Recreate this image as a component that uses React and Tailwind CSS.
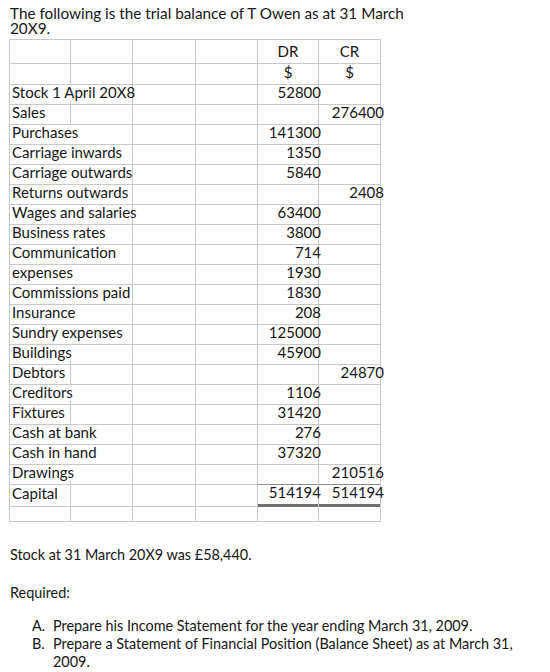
import React from 'react';

const rows = [
  { label: '', dr: 'DR', cr: 'CR', head: true, h: 'h-[21px]' },
  { label: '', dr: '$', cr: '$', head: true },
  { label: 'Stock 1 April 20X8', dr: '52800' },
  { label: 'Sales', cr: '276400' },
  { label: 'Purchases', dr: '141300' },
  { label: 'Carriage inwards', dr: '1350' },
  { label: 'Carriage outwards', dr: '5840' },
  { label: 'Returns outwards', cr: '2408' },
  { label: 'Wages and salaries', dr: '63400' },
  { label: 'Business rates', dr: '3800' },
  { label: 'Communication', dr: '714' },
  { label: 'expenses', dr: '1930' },
  { label: 'Commissions paid', dr: '1830' },
  { label: 'Insurance', dr: '208' },
  { label: 'Sundry expenses', dr: '125000' },
  { label: 'Buildings', dr: '45900' },
  { label: 'Debtors', cr: '24870' },
  { label: 'Creditors', dr: '1106' },
  { label: 'Fixtures', dr: '31420' },
  { label: 'Cash at bank', dr: '276' },
  { label: 'Cash in hand', dr: '37320' },
  { label: 'Drawings', cr: '210516', ruleBelow: true },
  { label: 'Capital', dr: '514194', cr: '514194', total: true },
  { label: '', h: 'h-[21px]' },
];

// short labels leave the gridline between the first two columns visible
const shortLabels = ['', 'Sales', 'Debtors', 'Fixtures', 'Capital'];

function Row({ row }) {
  const h = row.h || 'h-[20px]';
  const split = shortLabels.includes(row.label);
  const cell = 'border-r border-b border-[#c9c9c9] flex items-center';
  let numBorder = 'border-b-[#c9c9c9]';
  if (row.ruleBelow) numBorder = 'border-b-[#8c8c8c]';
  if (row.total) numBorder = 'border-b-[3px] border-b-[#707070]';

  return (
    <div className={`grid grid-cols-[61px_62px_63px_62px_61px_62px] ${h}`}>
      {split ? (
        <>
          <div className={`${cell} pl-[2px] whitespace-nowrap`}>{row.label}</div>
          <div className={cell} />
        </>
      ) : (
        <div className={`${cell} col-span-2 pl-[2px] whitespace-nowrap`}>{row.label}</div>
      )}
      <div className={cell} />
      <div className={cell} />
      <div className={`border-r border-b border-[#c9c9c9] ${numBorder} flex items-center ${row.head ? 'justify-center' : 'justify-end'} whitespace-nowrap`}>
        <span className={row.head ? '' : '-mr-[3px]'}>{row.dr}</span>
      </div>
      <div className={`border-r border-b border-[#c9c9c9] ${numBorder} flex items-center ${row.head ? 'justify-center' : 'justify-end'} whitespace-nowrap`}>
        <span className={row.head ? '' : '-mr-[4px]'}>{row.cr}</span>
      </div>
    </div>
  );
}

export default function App() {
  return (
    <div className="w-[550px] h-[672px] bg-white text-[#161616] px-[10px] pt-[6px] overflow-hidden" style={{ fontFamily: 'Lato, "Open Sans", sans-serif' }}>
      <p className="text-[15.3px] leading-[15px]">
        The following is the trial balance of T Owen as at 31 March
        <br />
        20X9.
      </p>

      <div className="mt-[3px] -ml-[1px] w-[372px] border-l border-t border-[#c9c9c9] text-[15px]">
        {rows.map((r, i) => (
          <Row key={i} row={r} />
        ))}
      </div>

      <div className="text-[14.4px]">
        <p className="mt-[22px]">Stock at 31 March 20X9 was £58,440.</p>
        <p className="mt-[16px]">Required:</p>

        <ol className="mt-[14px] ml-[22px] leading-[18px]">
          <li className="flex">
            <span className="w-[21px] shrink-0">A.</span>
            <span>Prepare his Income Statement for the year ending March 31, 2009.</span>
          </li>
          <li className="flex">
            <span className="w-[21px] shrink-0">B.</span>
            <span>Prepare a Statement of Financial Position (Balance Sheet) as at March 31, 2009.</span>
          </li>
        </ol>
      </div>
    </div>
  );
}
